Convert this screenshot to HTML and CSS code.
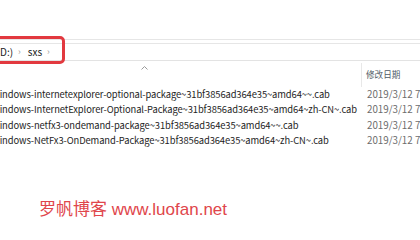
FILE: index.html
```html
<!DOCTYPE html>
<html lang="zh-CN">
<head>
<meta charset="utf-8">
<link rel="stylesheet" href="styles.css">
</head>
<body>
<div class="page">
  <div class="addr">
    <div class="crumbs">
      <span class="crumb">D:)</span>
      <span class="sep">›</span>
      <span class="crumb">sxs</span>
      <span class="sep">›</span>
    </div>
    <div class="highlight"></div>
  </div>
  <div class="list">
    <div class="head">
      <div class="head-name">
        <svg class="caret" width="7" height="4" viewBox="0 0 7 4"><polyline points="0.5,3.5 3.5,0.5 6.5,3.5" fill="none" stroke="#9a9a9a" stroke-width="1"/></svg>
      </div>
      <div class="head-date">修改日期</div>
    </div>
    <div class="row"><div class="name">Windows-internetexplorer-optional-package~31bf3856ad364e35~amd64~~.cab</div><div class="date">2019/3/12 7:26</div></div>
    <div class="row"><div class="name">Windows-InternetExplorer-Optional-Package~31bf3856ad364e35~amd64~zh-CN~.cab</div><div class="date">2019/3/12 7:26</div></div>
    <div class="row"><div class="name">Windows-netfx3-ondemand-package~31bf3856ad364e35~amd64~~.cab</div><div class="date">2019/3/12 7:26</div></div>
    <div class="row"><div class="name">Windows-NetFx3-OnDemand-Package~31bf3856ad364e35~amd64~zh-CN~.cab</div><div class="date">2019/3/12 7:26</div></div>
  </div>
  <div class="mark">罗帆博客 www.luofan.net</div>
</div>
</body>
</html>
```
FILE: styles.css
```css
html, body {
  margin: 0;
  padding: 0;
  background: #ffffff;
  overflow: hidden;
}
.page {
  width: 420px;
  height: 240px;
  overflow: hidden;
  font-family: "Noto Sans CJK SC", "Noto Sans", sans-serif;
  color: #1e1e1e;
}
.addr {
  position: relative;
  margin-top: 39px;
  border-top: 1px solid #e6e6e6;
}
.crumbs {
  margin-top: 3px;
  border-top: 1px solid #e6e6e6;
  border-bottom: 1px solid #e3e3e3;
  height: 16px;
  display: flex;
  align-items: center;
  font-size: 10px;
  line-height: 16px;
  color: #222;
}
.sep {
  color: #999;
  font-size: 9px;
  margin: 0 7px 0 5px;
}
.highlight {
  position: absolute;
  left: -8px;
  top: -4px;
  width: 67px;
  height: 22px;
  border: 3px solid #e2393f;
  border-radius: 5px;
}
.list {
  display: flex;
  flex-direction: column;
}
.head {
  display: grid;
  grid-template-columns: 361px 1fr;
  height: 26px;
}
.head-name {
  position: relative;
}
.caret {
  position: absolute;
  left: 141px;
  top: 5px;
}
.head-date {
  border-left: 1px solid #e8e8e8;
  margin-top: 2px;
  padding-left: 4px;
  font-size: 8.6px;
  line-height: 22px;
  color: #4f5a66;
}
.row {
  display: grid;
  grid-template-columns: 367px 1fr;
  height: 15.3px;
  font-size: 9.4px;
  letter-spacing: -0.1px;
  line-height: 15.3px;
  white-space: nowrap;
}
.name {
  margin-left: -8.5px;
  color: #1e1e1e;
}
.date {
  color: #6d6d6d;
  font-size: 9.8px;
  letter-spacing: 0;
}
.mark {
  margin-top: 51px;
  margin-left: 39px;
  font-size: 17px;
  line-height: 22px;
  color: #e0464b;
  font-family: "Liberation Sans", "Noto Sans CJK SC", sans-serif;
}
```
